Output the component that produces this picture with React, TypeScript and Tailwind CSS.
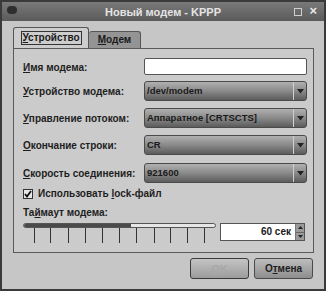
import React from "react";

const font = { fontFamily: '"Liberation Sans", Arial, sans-serif' };

function Label({ u, rest }: { u: string; rest: string }) {
  return (
    <span className="whitespace-nowrap text-[10px] font-bold leading-[12px] text-[#1e1e1e]">
      <span className="underline">{u}</span>
      {rest}
    </span>
  );
}

function Combo({ value }: { value: string }) {
  return (
    <div className="flex h-[20px] w-[163px] shrink-0 rounded-[3px] border border-[#4a4a4a] bg-gradient-to-b from-[#b0b0b0] via-[#8a8a8a] to-[#5c5c5c]">
      <div className="flex flex-1 items-center whitespace-nowrap pl-[2px] text-[9.5px] font-bold leading-[12px] text-[#1a1a1a]">
        {value}
      </div>
      <div className="flex w-[13px] items-center justify-center border-l border-[#d0d0d0]">
        <svg width="7" height="5" viewBox="0 0 7 5">
          <path d="M0 0 L7 0 L3.5 4.5 Z" fill="#222" />
        </svg>
      </div>
    </div>
  );
}

export default function App() {
  const ticks = [32, 48, 66, 83, 100, 117, 134, 152, 168, 185, 202];
  return (
    <div
      style={font}
      className="flex h-[291px] w-[326px] flex-col overflow-hidden border-2 border-[#3a3a3a] bg-[#c6c6c6] leading-[12px]"
    >
      {/* title bar */}
      <div className="relative flex h-[19px] shrink-0 items-center justify-center bg-gradient-to-b from-[#7a7a7a] to-[#5a5a5a]">
        <div className="absolute left-[5px] top-[4px] h-[8px] w-[10px] rounded-sm bg-[#2e2e2e]" />
        <span className="whitespace-nowrap text-[11px] font-bold leading-[14px] text-[#e4e4e4]">Новый модем - KPPP</span>
        <div className="absolute right-[22px] top-[6px] h-[8px] w-[8px] border border-[#cfcfcf]" />
        <span className="absolute right-[7px] top-[2px] text-[13px] font-bold leading-[14px] text-[#e8e8e8]">×</span>
      </div>

      <div className="flex flex-1 flex-col pl-[11px] pr-[11px] pt-[6px]">
        {/* tabs */}
        <div className="flex h-[21px] shrink-0 items-end">
          <div className="flex h-[21px] w-[76px] items-center justify-center rounded-t-[3px] border border-b-0 border-[#555] bg-[#cdcdcd]">
            <span className="whitespace-nowrap border border-[#333] px-[1px] text-[10px] font-bold leading-[12px] text-[#1a1a1a]">
              <span className="underline">У</span>стройство
            </span>
          </div>
          <div className="flex h-[17px] w-[52px] items-center justify-center rounded-t-[3px] border border-b-0 border-l-0 border-[#555] bg-[#949494]">
            <span className="whitespace-nowrap text-[10px] font-bold leading-[12px] text-[#1a1a1a]">
              <span className="underline">М</span>одем
            </span>
          </div>
        </div>

        {/* panel */}
        <div className="flex h-[205px] w-[301px] shrink-0 flex-col border border-[#5a5a5a] bg-[#cbcbcb] pl-[9px] pr-[7px]">
          <div className="mt-[9px] flex h-[17px] items-center">
            <div className="w-[121px] shrink-0">
              <Label u="И" rest="мя модема:" />
            </div>
            <div className="h-[17px] w-[163px] shrink-0 rounded-[2px] border border-[#555] bg-white" />
          </div>
          <div className="mt-[6px] flex h-[20px] items-center">
            <div className="w-[121px] shrink-0">
              <Label u="У" rest="стройство модема:" />
            </div>
            <Combo value="/dev/modem" />
          </div>
          <div className="mt-[7px] flex h-[20px] items-center">
            <div className="w-[121px] shrink-0">
              <Label u="У" rest="правление потоком:" />
            </div>
            <Combo value="Аппаратное [CRTSCTS]" />
          </div>
          <div className="mt-[7px] flex h-[20px] items-center">
            <div className="w-[121px] shrink-0">
              <Label u="О" rest="кончание строки:" />
            </div>
            <Combo value="CR" />
          </div>
          <div className="mt-[8px] flex h-[20px] items-center">
            <div className="w-[121px] shrink-0">
              <Label u="С" rest="корость соединения:" />
            </div>
            <Combo value="921600" />
          </div>
          <div className="mt-[4px] flex h-[14px] items-center gap-[5px]">
            <div className="flex h-[10px] w-[10px] items-center justify-center border border-[#333] bg-[#e8e8e8]">
              <svg width="8" height="8" viewBox="0 0 8 8">
                <path d="M1 4 L3 6.5 L7 1" stroke="#111" strokeWidth="1.8" fill="none" />
              </svg>
            </div>
            <span className="whitespace-nowrap text-[10px] font-bold leading-[12px] text-[#1e1e1e]">
              Использовать <span className="underline">l</span>ock-файл
            </span>
          </div>
          <div className="mt-[6px] flex h-[12px] items-center">
            <span className="whitespace-nowrap text-[10px] font-bold leading-[12px] text-[#1e1e1e]">
              Та<span className="underline">й</span>маут модема:
            </span>
          </div>
          <div className="mt-[4px] flex items-start">
            <div className="flex w-[193px] shrink-0 flex-col">
              <div className="flex h-[5px] w-[193px] overflow-hidden rounded-full border border-[#555] bg-[#e6e6e6]">
                <div className="h-full w-[107px] bg-[#4a4a4a]" />
              </div>
              <div className="relative h-[15px]">
                {ticks.map((x) => (
                  <div
                    key={x}
                    className="absolute top-0 h-[15px] w-px bg-[#333]"
                    style={{ left: x - 21 }}
                  />
                ))}
              </div>
            </div>
            <div className="ml-[4px] flex h-[18px] w-[85px] shrink-0 border border-[#555] bg-white">
              <div className="flex flex-1 items-center justify-end whitespace-nowrap pr-[4px] text-[10px] font-bold leading-[12px] text-[#1a1a1a]">
                60 сек
              </div>
              <div className="flex w-[9px] flex-col border-l border-[#777] bg-[#9a9a9a]">
                <div className="flex flex-1 items-center justify-center border-b border-[#666]">
                  <svg width="5" height="3" viewBox="0 0 5 3">
                    <path d="M0 3 L5 3 L2.5 0 Z" fill="#222" />
                  </svg>
                </div>
                <div className="flex flex-1 items-center justify-center">
                  <svg width="5" height="3" viewBox="0 0 5 3">
                    <path d="M0 0 L5 0 L2.5 3 Z" fill="#222" />
                  </svg>
                </div>
              </div>
            </div>
          </div>
        </div>

        {/* buttons */}
        <div className="mt-[5px] flex shrink-0 justify-end gap-[5px]">
          <div className="flex h-[21px] w-[59px] items-center justify-center rounded-[3px] border border-[#3a3a3a] bg-gradient-to-b from-[#c4c4c4] to-[#9c9c9c]">
            <span className="whitespace-nowrap text-[11px] font-bold leading-[12px] text-[#a8a8a8]">
              <span className="underline">O</span>K
            </span>
          </div>
          <div className="flex h-[21px] w-[59px] items-center justify-center rounded-[3px] border border-[#4a4a4a] bg-gradient-to-b from-[#bdbdbd] to-[#8e8e8e]">
            <span className="whitespace-nowrap text-[10px] font-bold leading-[12px] text-[#1e1e1e]">
              О<span className="underline">т</span>мена
            </span>
          </div>
        </div>
      </div>
    </div>
  );
}
